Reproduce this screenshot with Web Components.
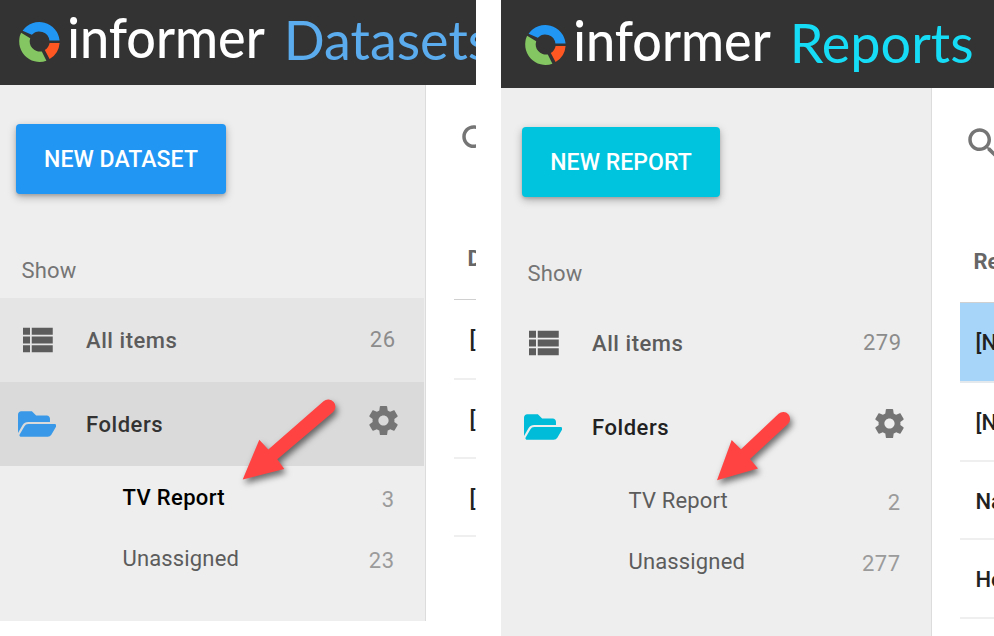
<!DOCTYPE html>
<html lang="en">
<head>
<meta charset="utf-8">
<title>Informer</title>
<style>
html,body{margin:0;height:100%;background:#fff;overflow:hidden}
body{font-family:Roboto,"Liberation Sans",sans-serif;font-size:22px}
</style>
</head>
<body>
<informer-page></informer-page>
<script>
const define = (name, html, setup) => customElements.define(name, class extends HTMLElement {
  connectedCallback() {
    if (this.shadowRoot) return;
    const root = this.attachShadow({ mode: 'open' });
    const t = document.createElement('template');
    t.innerHTML = html;
    root.append(t.content.cloneNode(true));
    if (setup) setup(this, root);
  }
});

const ICONS = {
  list: ['0 0 24 24', 'M4 14h4v-4H4v4zm0 5h4v-4H4v4zM4 9h4V5H4v4zm5 5h12v-4H9v4zm0 5h12v-4H9v4zM9 5v4h12V5H9z'],
  folder: ['0 0 576 512', 'M572.694 292.093L500.27 416.248A63.997 63.997 0 0 1 444.989 448H45.025c-18.523 0-30.064-20.093-20.731-36.093l72.424-124.155A64 64 0 0 1 152 256h399.964c18.523 0 30.064 20.093 20.73 36.093zM152 224h328v-48c0-26.51-21.49-48-48-48H272l-64-64H48C21.49 64 0 85.49 0 112v278.046l69.077-118.418C86.214 242.25 117.989 224 152 224z'],
  gear: ['0 0 24 24', 'M19.43 12.98c.04-.32.07-.64.07-.98s-.03-.66-.07-.98l2.11-1.65c.19-.15.24-.42.12-.64l-2-3.46c-.12-.22-.39-.3-.61-.22l-2.49 1c-.52-.4-1.08-.73-1.69-.98l-.38-2.65C14.46 2.18 14.25 2 14 2h-4c-.25 0-.46.18-.49.42l-.38 2.65c-.61.25-1.17.59-1.69.98l-2.49-1c-.23-.09-.49 0-.61.22l-2 3.46c-.13.22-.07.49.12.64l2.11 1.65c-.04.32-.07.65-.07.98s.03.66.07.98l-2.11 1.65c-.19.15-.24.42-.12.64l2 3.46c.12.22.39.3.61.22l2.49-1c.52.4 1.08.73 1.69.98l.38 2.65c.03.24.24.42.49.42h4c.25 0 .46-.18.49-.42l.38-2.65c.61-.25 1.17-.59 1.69-.98l2.49 1c.23.09.49 0 .61-.22l2-3.46c.12-.22.07-.49-.12-.64l-2.11-1.65zM12 15.5c-1.93 0-3.5-1.57-3.5-3.5s1.57-3.5 3.5-3.5 3.5 1.57 3.5 3.5-1.57 3.5-3.5 3.5z'],
  search: ['0 0 24 24', 'M15.5 14h-.79l-.28-.27C15.41 12.59 16 11.11 16 9.5 16 5.91 13.09 3 9.5 3S3 5.91 3 9.5 5.91 16 9.5 16c1.61 0 3.09-.59 4.23-1.57l.27.28v.79l5 4.99L20.49 19l-4.99-5zm-6 0C7.01 14 5 11.99 5 9.5S7.01 5 9.5 5 14 7.01 14 9.5 11.99 14 9.5 14z']
};

define('ui-icon', `<style>:host{display:block;flex:none}svg{display:block;width:100%;height:100%;fill:currentColor}</style><svg><path/></svg>`,
  (el, root) => {
    const [box, d] = ICONS[el.getAttribute('name')];
    root.querySelector('svg').setAttribute('viewBox', box);
    root.querySelector('path').setAttribute('d', d);
  });

define('brand-header', `<style>
:host{display:block;flex:none;height:85px;padding:var(--inset-y) 0 0 var(--inset-x);background:#333;overflow:hidden}
svg{display:block}
text{font-family:Lato,"Open Sans",sans-serif}
</style>
<svg width="500" height="85">
  <path fill="#2196f3" d="M22.6 30.8A20.4 20.4 0 0 1 59.6 40.5H49.4A10.2 10.2 0 0 0 31.8 34.8Z"/>
  <path fill="#84c662" d="M21.1 32.8A20.4 20.4 0 0 0 46.4 60.7L41.8 51.4A10.2 10.2 0 0 1 30.2 38.2Z"/>
  <path fill="#ff5722" d="M59.6 43H49.6A10.4 10.4 0 0 1 44.8 50L49.6 59.1A20.4 20.4 0 0 0 59.6 43Z"/>
  <text x="67.3" y="58" font-size="55.5" font-weight="500" fill="#fff" textLength="197.5" lengthAdjust="spacingAndGlyphs">informer</text>
  <text id="product" x="283.7" y="60" font-size="54"></text>
</svg>`, (el, root) => {
  const t = root.getElementById('product');
  t.textContent = el.getAttribute('product');
  t.setAttribute('fill', el.getAttribute('tint'));
});

define('raised-button', `<style>
:host{display:flex;align-items:center;justify-content:center;height:70px;width:var(--button-width);border-radius:4px;background:var(--button);color:#fff;font-weight:500;font-size:23px;letter-spacing:.06px;box-shadow:0 3px 8px rgba(0,0,0,.28),0 2px 3px rgba(0,0,0,.12);white-space:nowrap}
</style><slot></slot>`);

define('nav-row', `<style>
:host{display:flex;box-sizing:border-box;align-items:center;height:84px;padding:0 28.5px 0 calc(16px + var(--inset-x));color:#5c5c5c;background:var(--row-bg,transparent);margin-right:1px}
.lead{width:70px;display:flex}
.label{flex:1;font-weight:500;letter-spacing:.55px;line-height:30px;padding-top:2px}
::slotted([slot=icon]){width:42px;height:42px}
::slotted([slot=icon][name=folder]){width:38.4px;height:34.1px;margin-left:2px;color:var(--folder)}
::slotted([slot=end]){line-height:30px;letter-spacing:.5px;color:#8c8c8c}
::slotted(ui-icon[slot=end]){width:35px;height:35px;margin:-7px -5.5px 0 0;color:#757575}
</style><span class="lead"><slot name="icon"></slot></span><span class="label"><slot></slot></span><slot name="end"></slot>`);

define('folder-row', `<style>
:host{display:flex;align-items:center;height:61px;padding:0 29.5px 0 calc(122.5px + var(--inset-x));color:#5c5c5c;line-height:30px;margin-right:1px}
:host([current]){color:#000;font-weight:500}
.label{flex:1;letter-spacing:.15px}
:host([current]) .label{letter-spacing:.35px}
::slotted([slot=end]){color:#9b9b9b;font-weight:400;letter-spacing:.5px;margin-top:4px}
</style><span class="label"><slot></slot></span><slot name="end"></slot>`);

define('side-nav', `<style>
:host{display:block;box-sizing:border-box;flex:none;width:calc(426px + var(--inset-x));border-right:1px solid #dcdcdc;background:#eee}
.action{padding:39px 0 0 calc(16px + var(--inset-x))}
.caption{padding:61px 0 12px calc(21.5px + var(--inset-x));line-height:31px;letter-spacing:.15px;color:#757575}
.folders{padding-top:1px}
</style><div class="action"><slot name="action"></slot></div><div class="caption">Show</div><slot></slot><div class="folders"><slot name="folders"></slot></div>`);

define('list-row', `<style>
:host{display:block;box-sizing:border-box;height:79px;padding:1px 0 0 15.5px;line-height:77px;border-bottom:2px solid #efefef;color:#212121;font-weight:500;white-space:nowrap;overflow:hidden}
:host(:nth-of-type(1)){height:80px}
:host(:nth-of-type(3)){height:78px}
:host([selected]){background:#a7d5fa;border-bottom-color:#e4e9ee}
</style><slot></slot>`);

define('item-list', `<style>
:host{display:block;flex:1;min-width:0;overflow:hidden;background:#fff}
.search{padding:35px 0 0 31px}
.search ui-icon{width:42px;height:42px;color:#757575}
.head{margin-left:28px;padding:82px 0 29px 13.5px;line-height:30px;height:26px;border-bottom:1px solid #d0d0d0;color:#666;font-weight:700;white-space:nowrap}
.rows{margin-left:28px}
</style><div class="search"><ui-icon name="search"></ui-icon></div><div class="head"><slot name="head"></slot></div><div class="rows"><slot></slot></div>`);

define('app-panel', `<style>
:host{display:flex;flex-direction:column;overflow:hidden;background:#fff}
.body{flex:1;display:flex;min-height:0}
</style><slot name="header"></slot><div class="body"><slot></slot></div>`);

define('red-arrow', `<style>
:host{position:absolute;left:0;top:0;pointer-events:none}
svg{display:block;filter:drop-shadow(2px 4px 3px rgba(0,0,0,.55))}
</style><svg width="994" height="636" fill="#ff4343">
<path d="M242.7 479.6L259.3 439.7L268.3 449.6L323.5 401.2A7 7 0 0 1 332.9 412.2L277.3 459.3L284.3 469Z"/>
<path d="M717 480.2L731.7 440L741 449.3L778.6 413.8A6.8 6.8 0 0 1 787.9 423.9L750 459L758 468.4Z"/></svg>`);

define('informer-page', `<style>
:host{display:grid;position:relative;grid-template-columns:476px 493px;column-gap:25px;width:994px;height:636px;align-items:start;overflow:hidden}
.datasets{--inset-x:0px;--inset-y:0px;--button:#2196f3;--button-width:210px;--folder:#3999e8;height:621px}
.reports{--inset-x:5px;--inset-y:3px;--button:#00c4de;--button-width:198px;--folder:#00bcd8;height:636px}
.dark{color:#333}.darker{color:#212121}
</style>
<app-panel class="datasets">
  <brand-header slot="header" product="Datasets" tint="#5aacee"></brand-header>
  <side-nav>
    <raised-button slot="action">NEW DATASET</raised-button>
    <nav-row style="--row-bg:#e5e5e5"><ui-icon slot="icon" name="list"></ui-icon>All items<span slot="end">26</span></nav-row>
    <nav-row class="dark" style="--row-bg:#dadada"><ui-icon slot="icon" name="folder"></ui-icon>Folders<ui-icon slot="end" name="gear"></ui-icon></nav-row>
    <folder-row slot="folders" current>TV Report<span slot="end">3</span></folder-row>
    <folder-row slot="folders">Unassigned<span slot="end">23</span></folder-row>
  </side-nav>
  <item-list><span slot="head">D</span><list-row>[</list-row><list-row>[</list-row><list-row>[</list-row></item-list>
</app-panel>
<app-panel class="reports">
  <brand-header slot="header" product="Reports" tint="#16dcf5"></brand-header>
  <side-nav>
    <raised-button slot="action">NEW REPORT</raised-button>
    <nav-row><ui-icon slot="icon" name="list"></ui-icon>All items<span slot="end">279</span></nav-row>
    <nav-row class="darker"><ui-icon slot="icon" name="folder"></ui-icon>Folders<ui-icon slot="end" name="gear"></ui-icon></nav-row>
    <folder-row slot="folders">TV Report<span slot="end">2</span></folder-row>
    <folder-row slot="folders">Unassigned<span slot="end">277</span></folder-row>
  </side-nav>
  <item-list><span slot="head">Re</span><list-row selected>[N</list-row><list-row>[N</list-row><list-row>Na</list-row><list-row>He</list-row></item-list>
</app-panel>
<red-arrow></red-arrow>`);
</script>
</body>
</html>
